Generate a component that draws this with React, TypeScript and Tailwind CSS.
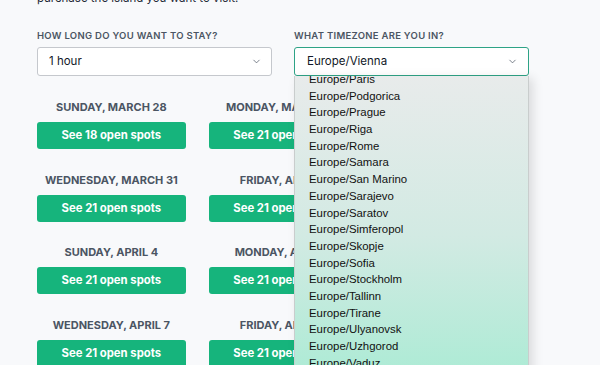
import React from 'react';
import { ChevronDown } from 'lucide-react';

const days = [
  ['Sunday, March 28', 18],
  ['Monday, March 29', 21],
  ['Tuesday, March 30', 21],
  ['Wednesday, March 31', 21],
  ['Friday, April 2', 21],
  ['Saturday, April 3', 21],
  ['Sunday, April 4', 21],
  ['Monday, April 5', 21],
  ['Tuesday, April 6', 21],
  ['Wednesday, April 7', 21],
  ['Friday, April 9', 21],
  ['Saturday, April 10', 21],
] as const;

const zones = [
  'Paris', 'Podgorica', 'Prague', 'Riga', 'Rome', 'Samara', 'San Marino', 'Sarajevo', 'Saratov',
  'Simferopol', 'Skopje', 'Sofia', 'Stockholm', 'Tallinn', 'Tirane', 'Ulyanovsk', 'Uzhgorod', 'Vaduz',
];

export default function App() {
  return (
    <div className="w-[600px] h-[365px] overflow-hidden bg-[#f8f9fb] pl-[37px] pr-[71px] font-['Inter',sans-serif]">
      <p className="-mt-[9px] text-[11.5px] leading-[15px] text-[#1f2937]">
        purchase the island you want to visit.
      </p>

      <div className="mt-[24px] grid grid-cols-2 gap-[22px]">
        <div>
          <label className="block text-[9.5px] font-semibold tracking-[0.03em] uppercase text-[#4b5563] leading-[12px]">
            How long do you want to stay?
          </label>
          <div className="mt-[5px] flex h-[29px] items-center justify-between rounded-[3px] border border-[#c5c8cd] bg-white pl-[11px] pr-[9px] text-[11.5px] text-[#111827]">
            <span>1 hour</span>
            <ChevronDown size={11} strokeWidth={1.6} className="text-[#4b5563]" />
          </div>
        </div>

        <div className="relative">
          <label className="block text-[9.5px] font-semibold tracking-[0.03em] uppercase text-[#4b5563] leading-[12px]">
            What timezone are you in?
          </label>
          <div className="mt-[5px] flex h-[29px] items-center justify-between rounded-[3px] border border-[#2ea386] bg-white pl-[12px] pr-[10px] text-[11.5px] text-[#111827]">
            <span>Europe/Vienna</span>
            <ChevronDown size={11} strokeWidth={1.6} className="text-[#4b5563]" />
          </div>

          <div className="absolute left-0 right-0 top-[46px] z-10 h-[320px] overflow-hidden border-l border-r border-[#c9cdcd] bg-gradient-to-b from-[#e8ebeb] via-[#d2eae3] to-[#a6ebd3] shadow-[4px_2px_10px_rgba(0,0,0,0.12)]">
            <ul className="-mt-[5px] pl-[14px] font-['Liberation_Sans',sans-serif] text-[11.4px] text-[#111111]">
              {zones.map((z) => (
                <li key={z} className="h-[16.7px] leading-[16.7px]">Europe/{z}</li>
              ))}
            </ul>
          </div>
        </div>
      </div>

      <div className="mt-[24px] grid grid-cols-3 gap-x-[23px] gap-y-[23.5px]">
        {days.map(([day, spots]) => (
          <div key={day} className="flex flex-col">
            <div className="text-center text-[11px] font-bold uppercase leading-[14px] text-[#4b5563]">
              {day}
            </div>
            <button className="mt-[8px] h-[27px] rounded-[3px] bg-[#16b47c] text-[11.3px] font-bold text-white">
              See {spots} open spots
            </button>
          </div>
        ))}
      </div>
    </div>
  );
}
